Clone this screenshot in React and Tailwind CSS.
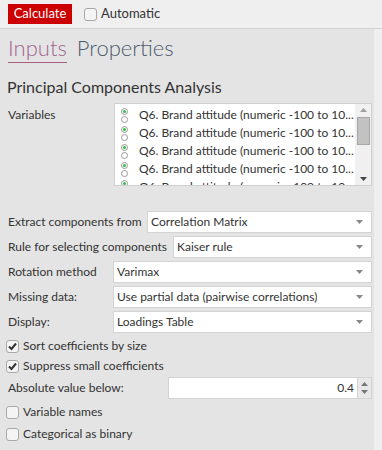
import React from "react";

const font = { fontFamily: "Lato, 'Noto Sans', sans-serif" };

function Caret() {
  return (
    <svg width="7" height="4" viewBox="0 0 7 4" className="shrink-0 fill-[#888]">
      <path d="M0 0h7L3.5 4z" />
    </svg>
  );
}

function Select({ value }) {
  return (
    <div className="flex h-[22px] min-w-0 flex-1 items-center justify-between border border-[#d4d4d4] bg-white pl-[3px] pr-[8px] text-[12px] text-[#333]">
      <span className="truncate">{value}</span>
      <Caret />
    </div>
  );
}

function Check({ checked, label, h }) {
  return (
    <div className={`flex ${h} items-center gap-[4px] pl-[6px] text-[12px] text-[#333]`}>
      <div className="flex h-[13px] w-[13px] items-center justify-center rounded-[3px] border border-[#a8a8a8] bg-[#f4f4f4]">
        {checked && (
          <svg width="9" height="9" viewBox="0 0 9 9">
            <path d="M1 4.5l2.5 2.5L8 1.5" stroke="#333" strokeWidth="2" fill="none" />
          </svg>
        )}
      </div>
      <span className="whitespace-nowrap">{label}</span>
    </div>
  );
}

function Radios() {
  return (
    <div className="flex w-[8px] shrink-0 flex-col items-center gap-[1px]">
      <div className="flex h-[7px] w-[7px] items-center justify-center rounded-full border border-[#999] bg-white">
        <div className="h-[3px] w-[3px] rounded-full bg-[#2fbf3a]" />
      </div>
      <div className="h-[7px] w-[7px] rounded-full border border-[#999] bg-white" />
    </div>
  );
}

export default function App() {
  const rows = [0, 1, 2, 3, 4];
  const selects = [
    { label: "Extract components from", value: "Correlation Matrix", w: "w-[147px]" },
    { label: "Rule for selecting components", value: "Kaiser rule", w: "w-[173px]" },
    { label: "Rotation method", value: "Varimax", w: "w-[113px]" },
    { label: "Missing data:", value: "Use partial data (pairwise correlations)", w: "w-[113px]" },
    { label: "Display:", value: "Loadings Table", w: "w-[113px]" },
  ];

  return (
    <div className="flex min-h-[450px] w-[382px] flex-col bg-[#e4e4e4]" style={font}>
      {/* toolbar */}
      <div className="flex h-[29px] shrink-0 items-center gap-[12px] border-b border-[#d2d2d2] bg-[#efefef] pl-[8px]">
        <div className="flex h-[20px] w-[64px] items-center justify-center bg-[#cc0000] text-[13px] text-white">
          Calculate
        </div>
        <div className="flex items-center gap-[4px] text-[13px] text-[#333]">
          <div className="h-[13px] w-[13px] rounded-[3px] border border-[#a8a8a8] bg-[#f4f4f4]" />
          <span>Automatic</span>
        </div>
      </div>

      <div className="flex flex-1">
        <div className="flex min-w-0 flex-1 flex-col pr-[2px]">
          {/* tabs */}
          <div className="flex items-end gap-[10px] pl-[8px] pt-[6px]">
            <div className="border-b border-[#a8607f] pb-[1px] text-[22px] font-light leading-[26px] text-[#a2668f]">
              Inputs
            </div>
            <div className="pb-[2px] text-[22px] font-light leading-[26px] text-[#4e5b6e]">
              Properties
            </div>
          </div>

          <div className="mt-[14px] pl-[7px] text-[16px] leading-[20px] text-[#333]">
            Principal Components Analysis
          </div>

          {/* variables */}
          <div className="mt-[6px] flex">
            <div className="w-[114px] shrink-0 pl-[8px] pt-[3px] text-[12px] text-[#333]">Variables</div>
            <div className="flex h-[83px] min-w-0 flex-1 overflow-hidden border border-[#d0d0d0] bg-white">
              <div className="flex min-w-0 flex-1 flex-col overflow-hidden pl-[5px] pt-[2px]">
                {rows.map((r) => (
                  <div key={r} className="flex h-[18px] shrink-0 items-center gap-[11px]">
                    <Radios />
                    <span className="whitespace-nowrap text-[12px] text-[#333]">
                      Q6. Brand attitude (numeric -100 to 10...
                    </span>
                  </div>
                ))}
              </div>
              <div className="flex w-[16px] shrink-0 flex-col items-center bg-[#f0f0f0] py-[4px]">
                <svg width="7" height="4" viewBox="0 0 7 4" className="fill-[#a0a0a0]">
                  <path d="M0 4h7L3.5 0z" />
                </svg>
                <div className="mt-[5px] h-[28px] w-[13px] border border-[#a6a6a6] bg-[#c2c2c2]" />
                <div className="flex-1" />
                <svg width="7" height="4" viewBox="0 0 7 4" className="fill-[#444]">
                  <path d="M0 0h7L3.5 4z" />
                </svg>
              </div>
            </div>
          </div>

          {/* selects */}
          <div className="mt-[25px] flex flex-col gap-[3px]">
            {selects.map((s) => (
              <div key={s.label} className="flex items-center">
                <div className={`${s.w} shrink-0 whitespace-nowrap pl-[8px] text-[12px] text-[#333]`}>
                  {s.label}
                </div>
                <Select value={s.value} />
              </div>
            ))}
          </div>

          <div className="mt-[3px] flex flex-col">
            <Check checked h="h-[20px]" label="Sort coefficients by size" />
            <Check checked h="h-[20px]" label="Suppress small coefficients" />
          </div>

          <div className="mt-[1px] flex items-center">
            <div className="w-[168px] shrink-0 pl-[8px] text-[12px] text-[#333]">Absolute value below:</div>
            <div className="flex h-[22px] min-w-0 flex-1 items-center justify-end border border-[#d4d4d4] bg-white pr-[3px] text-[12px] text-[#333]">
              0.4
            </div>
            <div className="flex h-[22px] w-[14px] shrink-0 flex-col items-center justify-center gap-[4px] border border-l-0 border-[#d4d4d4] bg-[#e8e8e8]">
              <svg width="7" height="4" viewBox="0 0 7 4" className="fill-[#777]">
                <path d="M0 4h7L3.5 0z" />
              </svg>
              <svg width="7" height="4" viewBox="0 0 7 4" className="fill-[#777]">
                <path d="M0 0h7L3.5 4z" />
              </svg>
            </div>
          </div>

          <div className="mt-[2px] flex flex-col">
            <Check h="h-[22px]" label="Variable names" />
            <Check h="h-[22px]" label="Categorical as binary" />
          </div>
        </div>
        <div className="w-[8px] shrink-0 bg-[#efefef]" />
      </div>
    </div>
  );
}
